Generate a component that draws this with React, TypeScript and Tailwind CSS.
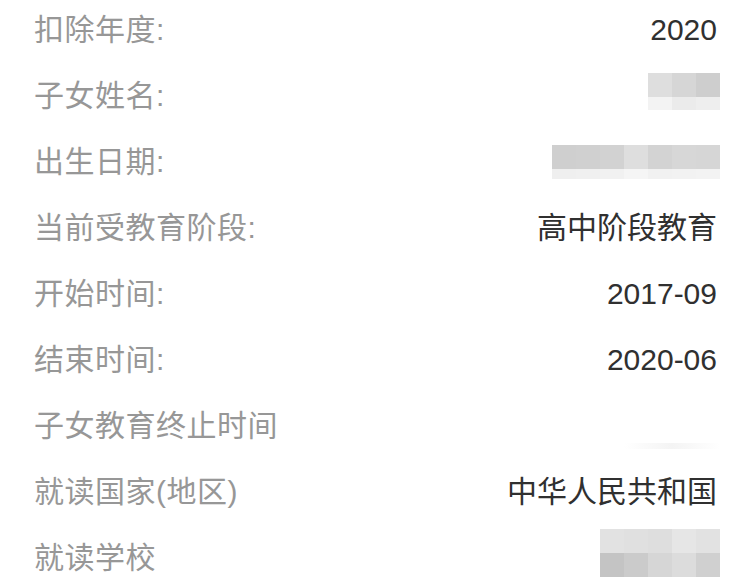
import React from "react";

type Cell = string[];

function Blur({ top, bottom, topH, bottomH, mt }: { top: Cell; bottom: Cell; topH: number; bottomH: number; mt: number }) {
  return (
    <div className="flex flex-col self-start -mr-[3px]" style={{ marginTop: mt }}>
      <div className="flex">
        {top.map((c, i) => (
          <div key={i} className="w-[24px]" style={{ height: topH, backgroundColor: c }} />
        ))}
      </div>
      <div className="flex">
        {bottom.map((c, i) => (
          <div key={i} className="w-[24px]" style={{ height: bottomH, backgroundColor: c }} />
        ))}
      </div>
    </div>
  );
}

function Row({ label, value, children }: { label: string; value?: string; children?: React.ReactNode }) {
  return (
    <div className="flex h-[66px] items-center justify-between pl-[34px] pr-[30px]">
      <span className="text-[30px] leading-none text-[#979797] tracking-[0.5px]">{label}</span>
      {value !== undefined && <span className="text-[30px] leading-none text-[#303030]">{value}</span>}
      {children}
    </div>
  );
}

export default function App() {
  return (
    <div
      className="w-[747px] h-[577px] overflow-hidden bg-white"
      style={{ fontFamily: '"Liberation Sans", "Noto Sans CJK SC", sans-serif' }}
    >
      <div className="-mt-[3px] flex flex-col">
        <Row label="扣除年度:" value="2020" />
        <Row label="子女姓名:">
          <Blur
            mt={10}
            topH={24}
            bottomH={13}
            top={["#dedede", "#d6d6d6", "#cecece"]}
            bottom={["#f3f3f3", "#ebebeb", "#eeeeee"]}
          />
        </Row>
        <Row label="出生日期:">
          <Blur
            mt={16}
            topH={24}
            bottomH={10}
            top={["#cfcfcf", "#d0d0d0", "#d2d2d2", "#dedede", "#d3d3d3", "#d7d7d7", "#d6d6d6"]}
            bottom={["#efefef", "#f0f0f0", "#f1f1f1", "#f5f5f5", "#f1f1f1", "#f2f2f2", "#f3f3f3"]}
          />
        </Row>
        <Row label="当前受教育阶段:" value="高中阶段教育" />
        <Row label="开始时间:" value="2017-09" />
        <Row label="结束时间:" value="2020-06" />
        <Row label="子女教育终止时间">
          <div className="self-start mt-[50px] -mr-[3px] h-[6px] w-[96px] bg-gradient-to-r from-white via-[#f4f4f4] to-white" />
        </Row>
        <Row label="就读国家(地区)" value="中华人民共和国" />
        <Row label="就读学校">
          <Blur
            mt={4}
            topH={24}
            bottomH={24}
            top={["#e2e2e2", "#e0e0e0", "#dedede", "#e6e6e6", "#e2e2e2"]}
            bottom={["#c4c4c4", "#cbcbcb", "#d6d6d6", "#dcdcdc", "#d0d0d0"]}
          />
        </Row>
      </div>
    </div>
  );
}
